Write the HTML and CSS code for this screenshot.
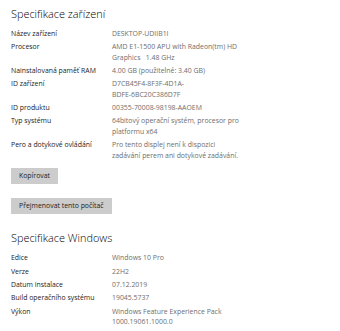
FILE: index.html
```html
<!DOCTYPE html>
<html lang="cs">
<head>
    <meta charset="UTF-8">
    <meta name="viewport" content="width=device-width, initial-scale=1.0">
    <title>Informace o systému</title>
    <link rel="stylesheet" href="styles.css">
</head>
<body>
    <div class="page">
        <h2 class="section-title">Specifikace zařízení</h2>

        <dl class="specs">
            <dt>Název zařízení</dt>
            <dd>DESKTOP-UDIIB1I</dd>

            <dt>Procesor</dt>
            <dd>AMD E1-1500 APU with Radeon(tm) HD<br>Graphics&nbsp;&nbsp; 1.48 GHz</dd>

            <dt>Nainstalovaná paměť RAM</dt>
            <dd>4.00 GB (použitelné: 3.40 GB)</dd>

            <dt>ID zařízení</dt>
            <dd>D7CB45F4-8F3F-4D1A-<br>BDFE-6BC20C386D7F</dd>

            <dt>ID produktu</dt>
            <dd>00355-70008-98198-AAOEM</dd>

            <dt>Typ systému</dt>
            <dd>64bitový operační systém, procesor pro<br>platformu x64</dd>

            <dt>Pero a dotykové ovládání</dt>
            <dd>Pro tento displej není k dispozici<br>zadávání perem ani dotykové zadávání.</dd>
        </dl>

        <div class="actions">
            <button class="btn">Kopírovat</button>
            <button class="btn">Přejmenovat tento počítač</button>
        </div>

        <h2 class="section-title windows-title">Specifikace Windows</h2>

        <dl class="specs">
            <dt>Edice</dt>
            <dd>Windows 10 Pro</dd>

            <dt>Verze</dt>
            <dd>22H2</dd>

            <dt>Datum instalace</dt>
            <dd>07.12.2019</dd>

            <dt>Build operačního systému</dt>
            <dd>19045.5737</dd>

            <dt>Výkon</dt>
            <dd>Windows Feature Experience Pack<br>1000.19061.1000.0</dd>
        </dl>
    </div>
</body>
</html>
```

FILE: styles.css
```css
* {
    margin: 0;
    padding: 0;
    box-sizing: border-box;
}

body {
    background: #ffffff;
    font-family: 'Open Sans', 'Noto Sans', sans-serif;
    color: #1b1b1b;
}

.page {
    padding: 6.5px 11px 0;
}

.section-title {
    font-size: 10.9px;
    line-height: 14px;
    font-weight: 300;
    color: #000;
    margin-bottom: 8.3px;
}

.windows-title {
    margin-top: 17px;
}

.specs {
    display: grid;
    grid-template-columns: 101px auto;
    row-gap: 2.8px;
    font-size: 6.9px;
    line-height: 10.5px;
}

.specs dt {
    color: #1b1b1b;
    white-space: nowrap;
}

.specs dd {
    color: #6e6e6e;
    white-space: nowrap;
}

.actions {
    display: flex;
    flex-direction: column;
    align-items: flex-start;
    gap: 14px;
    margin-top: 7px;
}

.btn {
    height: 16px;
    padding: 0 8px;
    background: #cccccc;
    border: none;
    color: #1b1b1b;
    font-family: inherit;
    font-size: 6.9px;
    line-height: 16px;
}
```
